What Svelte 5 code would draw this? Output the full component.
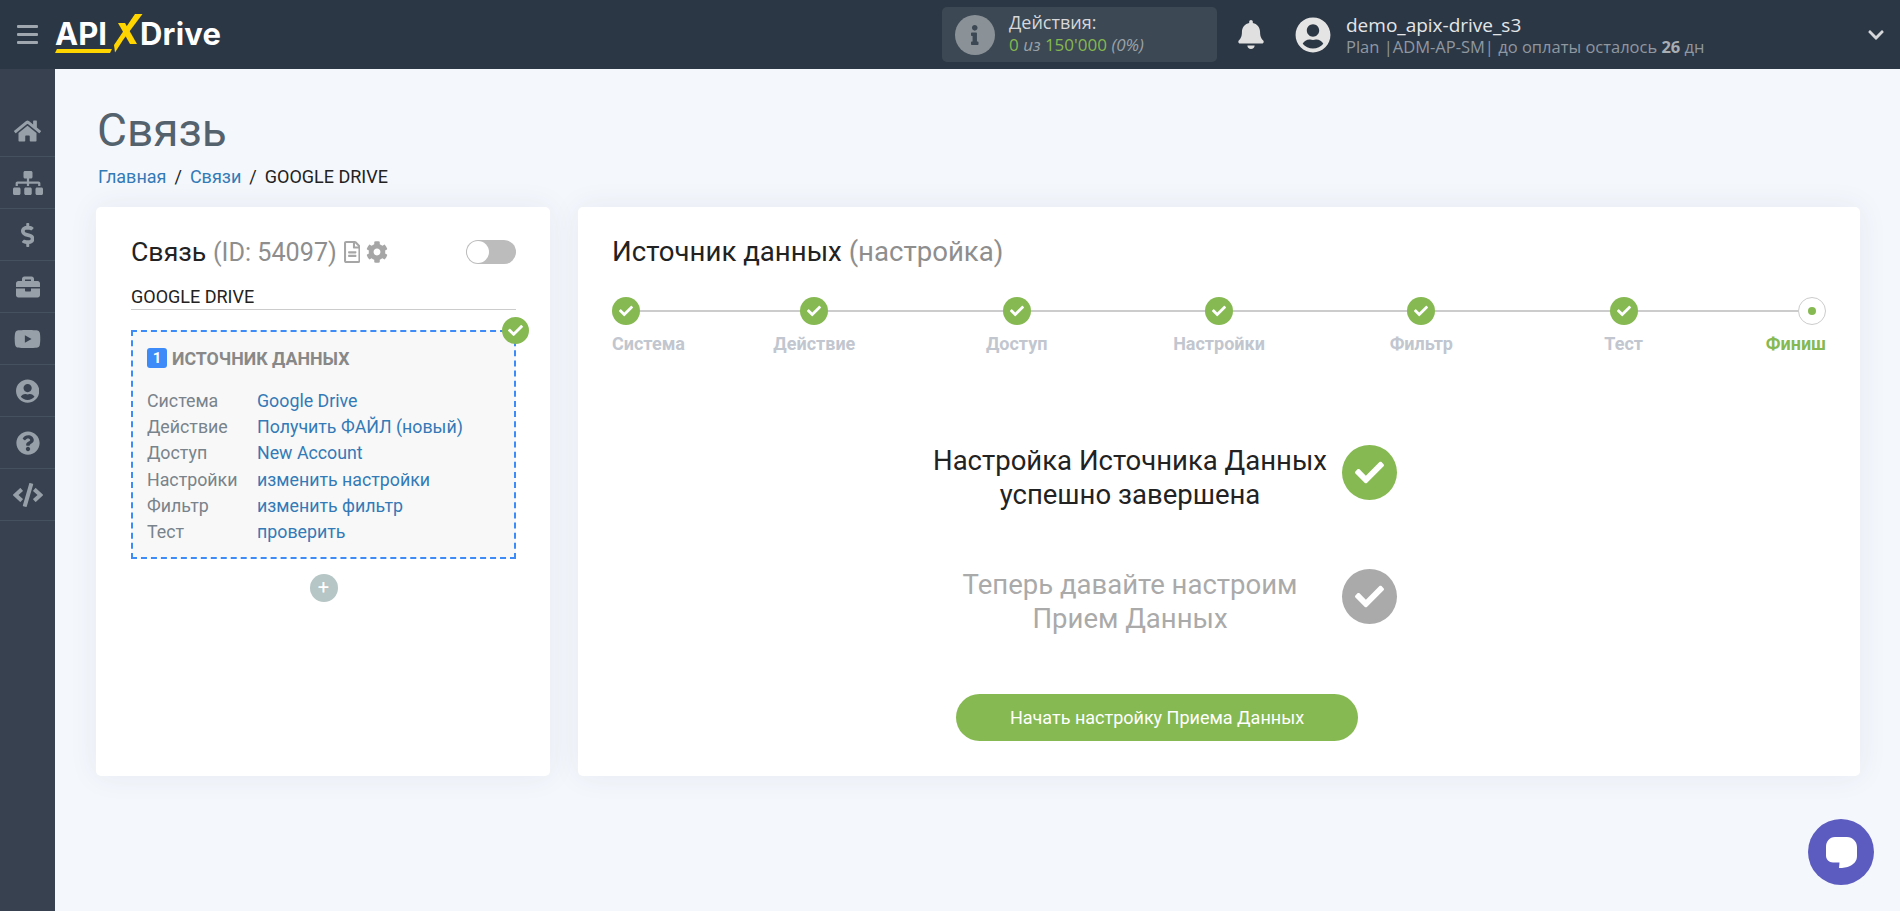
<script>
  const icons = {
    home: ['0 0 576 512', 'M280.37 148.26L96 300.11V464a16 16 0 0 0 16 16l112.06-.29a16 16 0 0 0 15.92-16V368a16 16 0 0 1 16-16h64a16 16 0 0 1 16 16v95.64a16 16 0 0 0 16 16.05L464 480a16 16 0 0 0 16-16V300L295.67 148.26a12.19 12.19 0 0 0-15.3 0zM571.6 251.47L488 182.56V44.05a12 12 0 0 0-12-12h-56a12 12 0 0 0-12 12v72.61L318.47 43a48 48 0 0 0-61 0L4.34 251.47a12 12 0 0 0-1.6 16.9l25.5 31A12 12 0 0 0 45.15 301l235.22-193.74a12.19 12.19 0 0 1 15.3 0L530.9 301a12 12 0 0 0 16.9-1.6l25.5-31a12 12 0 0 0-1.7-16.93z'],
    sitemap: ['0 0 640 512', 'M128 352H32c-17.67 0-32 14.33-32 32v96c0 17.67 14.33 32 32 32h96c17.67 0 32-14.33 32-32v-96c0-17.67-14.33-32-32-32zm-24-80h192v48h48v-48h192v48h48v-57.59c0-21.17-17.23-38.41-38.41-38.41H344v-64h40c17.67 0 32-14.33 32-32V32c0-17.67-14.33-32-32-32H256c-17.67 0-32 14.33-32 32v96c0 17.67 14.33 32 32 32h40v64H94.41C73.23 224 56 241.23 56 262.41V320h48v-48zm264 80h-96c-17.67 0-32 14.33-32 32v96c0 17.67 14.33 32 32 32h96c17.67 0 32-14.33 32-32v-96c0-17.67-14.33-32-32-32zm240 0h-96c-17.67 0-32 14.33-32 32v96c0 17.67 14.33 32 32 32h96c17.67 0 32-14.33 32-32v-96c0-17.67-14.33-32-32-32z'],
    dollar: ['0 0 288 512', 'M209.2 233.4l-108-31.6C88.7 198.2 80 186.5 80 173.5c0-16.3 13.2-29.5 29.5-29.5h66.3c12.2 0 24.2 3.7 34.2 10.5 6.1 4.1 14.3 3.1 19.5-2l34.8-34c7.1-6.9 6.1-18.4-1.8-24.5C238 74.8 207.4 64.1 176 64V16c0-8.8-7.2-16-16-16h-32c-8.8 0-16 7.2-16 16v48h-2.5C45.8 64-5.4 118.7.5 183.6c4.2 46.1 39.4 83.6 83.8 96.6l102.5 30c12.5 3.7 21.2 15.3 21.2 28.3 0 16.3-13.2 29.5-29.5 29.5h-66.3C100 368 88 364.3 78 357.5c-6.1-4.1-14.3-3.1-19.5 2l-34.8 34c-7.1 6.9-6.1 18.4 1.8 24.5 24.5 19.2 55.1 29.9 86.5 30v48c0 8.8 7.2 16 16 16h32c8.8 0 16-7.2 16-16v-48.2c46.6-.9 90.3-28.6 105.7-72.7 21.5-61.6-14.6-124.8-72.5-141.7z'],
    briefcase: ['0 0 512 512', 'M320 336c0 8.84-7.16 16-16 16h-96c-8.84 0-16-7.16-16-16v-48H0v144c0 25.6 22.4 48 48 48h416c25.6 0 48-22.4 48-48V288H320v48zm144-208h-80V80c0-25.6-22.4-48-48-48H176c-25.6 0-48 22.4-48 48v48H48c-25.6 0-48 22.4-48 48v80h512v-80c0-25.6-22.4-48-48-48zm-144 0H192V96h128v32z'],
    youtube: ['0 0 576 512', 'M549.655 124.083c-6.281-23.65-24.787-42.276-48.284-48.597C458.781 64 288 64 288 64S117.22 64 74.629 75.486c-23.497 6.322-42.003 24.947-48.284 48.597-11.412 42.867-11.412 132.305-11.412 132.305s0 89.438 11.412 132.305c6.281 23.65 24.787 41.5 48.284 47.821C117.22 448 288 448 288 448s170.78 0 213.371-11.486c23.497-6.321 42.003-24.171 48.284-47.821 11.412-42.867 11.412-132.305 11.412-132.305s0-89.438-11.412-132.305zm-317.51 213.508V175.185l142.739 81.205-142.739 81.201z'],
    user: ['0 0 496 512', 'M248 8C111 8 0 119 0 256s111 248 248 248 248-111 248-248S385 8 248 8zm0 96c48.6 0 88 39.4 88 88s-39.4 88-88 88-88-39.4-88-88 39.4-88 88-88zm0 344c-58.7 0-111.3-26.6-146.5-68.2 18.8-35.4 55.6-59.8 98.5-59.8 2.4 0 4.8.4 7.1 1.1 13 4.2 26.6 6.9 40.9 6.9 14.3 0 28-2.7 40.9-6.9 2.3-.7 4.7-1.1 7.1-1.1 42.9 0 79.7 24.4 98.5 59.8C359.3 421.4 306.7 448 248 448z'],
    question: ['0 0 512 512', 'M504 256c0 136.997-111.043 248-248 248S8 392.997 8 256C8 119.083 119.043 8 256 8s248 111.083 248 248zM262.655 90c-54.497 0-89.255 22.957-116.549 63.758-3.536 5.286-2.353 12.415 2.715 16.258l34.699 26.31c5.205 3.947 12.621 3.008 16.665-2.122 17.864-22.658 30.113-35.797 57.303-35.797 20.429 0 45.698 13.148 45.698 32.958 0 14.976-12.363 22.667-32.534 33.976C247.128 238.528 216 254.941 216 296v4c0 6.627 5.373 12 12 12h56c6.627 0 12-5.373 12-12v-1.333c0-28.462 83.186-29.647 83.186-106.667 0-58.002-60.165-102-116.531-102zM256 338c-25.365 0-46 20.635-46 46 0 25.364 20.635 46 46 46s46-20.636 46-46c0-25.365-20.635-46-46-46z'],
    code: ['0 0 640 512', 'M278.9 511.5l-61-17.7c-6.4-1.8-10-8.5-8.2-14.9L346.2 8.7c1.8-6.4 8.5-10 14.9-8.2l61 17.7c6.4 1.8 10 8.5 8.2 14.9L293.8 503.3c-1.9 6.4-8.5 10.1-14.9 8.2zm-114-112.2l43.5-46.4c4.6-4.9 4.3-12.7-.8-17.2L117 256l90.6-79.7c5.1-4.5 5.5-12.3.8-17.2l-43.5-46.4c-4.5-4.8-12.1-5.1-17-.5L3.8 247.2c-5.1 4.7-5.1 12.8 0 17.5l144.1 135.1c4.9 4.6 12.5 4.4 17-.5zm327.2.6l144.1-135.1c5.1-4.7 5.1-12.8 0-17.5L492.1 112.1c-4.8-4.5-12.4-4.3-17 .5L431.6 159c-4.6 4.9-4.3 12.7.8 17.2L523 256l-90.6 79.7c-5.1 4.5-5.5 12.3-.8 17.2l43.5 46.4c4.5 4.9 12.1 5.1 17 .6z'],
    bell: ['0 0 448 512', 'M224 512c35.32 0 63.97-28.65 63.97-64H160.03c0 35.35 28.65 64 63.97 64zm215.39-149.71c-19.32-20.76-55.47-51.99-55.47-154.29 0-77.7-54.48-139.9-127.94-155.16V32c0-17.67-14.32-32-31.98-32s-31.98 14.33-31.98 32v20.84C118.56 68.1 64.08 130.3 64.08 208c0 102.3-36.15 133.53-55.47 154.29-6 6.45-8.66 14.16-8.61 21.71.11 16.4 12.98 32 32.1 32h383.8c19.12 0 32-15.6 32.1-32 .05-7.55-2.61-15.27-8.61-21.71z'],
    check: ['0 0 512 512', 'M173.898 439.404l-166.4-166.4c-9.997-9.997-9.997-26.206 0-36.204l36.203-36.204c9.997-9.998 26.207-9.998 36.204 0L192 312.69 432.095 72.596c9.997-9.997 26.207-9.997 36.204 0l36.203 36.204c9.997 9.997 9.997 26.206 0 36.204l-294.4 294.401c-9.998 9.997-26.207 9.997-36.204-.001z'],
    cog: ['0 0 512 512', 'M487.4 315.7l-42.6-24.6c4.3-23.2 4.3-47 0-70.2l42.6-24.6c4.9-2.8 7.1-8.6 5.5-14-11.1-35.6-30-67.8-54.7-94.6-3.8-4.1-10-5.1-14.8-2.3L380.8 110c-17.9-15.4-38.5-27.3-60.8-35.1V25.8c0-5.6-3.9-10.5-9.4-11.7-36.7-8.2-74.3-7.8-109.2 0-5.5 1.2-9.4 6.1-9.4 11.7V75c-22.2 7.9-42.8 19.8-60.8 35.1L88.7 85.5c-4.9-2.8-11-1.9-14.8 2.3-24.7 26.7-43.6 58.9-54.7 94.6-1.7 5.4.6 11.2 5.5 14L67.3 221c-4.3 23.2-4.3 47 0 70.2l-42.6 24.6c-4.9 2.8-7.1 8.6-5.5 14 11.1 35.6 30 67.8 54.7 94.6 3.8 4.1 10 5.1 14.8 2.3l42.6-24.6c17.9 15.4 38.5 27.3 60.8 35.1v49.2c0 5.6 3.9 10.5 9.4 11.7 36.7 8.2 74.3 7.8 109.2 0 5.5-1.2 9.4-6.1 9.4-11.7v-49.2c22.2-7.9 42.8-19.8 60.8-35.1l42.6 24.6c4.9 2.8 11 1.9 14.8-2.3 24.7-26.7 43.6-58.9 54.7-94.6 1.5-5.5-.7-11.3-5.6-14.1zM256 336c-44.1 0-80-35.9-80-80s35.9-80 80-80 80 35.9 80 80-35.9 80-80 80z'],
    file: ['0 0 384 512', 'M288 248v28c0 6.6-5.4 12-12 12H108c-6.6 0-12-5.4-12-12v-28c0-6.6 5.4-12 12-12h168c6.6 0 12 5.4 12 12zm-12 72H108c-6.6 0-12 5.4-12 12v28c0 6.6 5.4 12 12 12h168c6.6 0 12-5.4 12-12v-28c0-6.6-5.4-12-12-12zm108-188.1V464c0 26.5-21.5 48-48 48H48c-26.5 0-48-21.5-48-48V48C0 21.5 21.5 0 48 0h204.1C264.8 0 277 5.1 286 14.1L369.9 98c9 8.9 14.1 21.2 14.1 33.9zm-128-80V128h76.1L256 51.9zM336 464V176H232c-13.3 0-24-10.7-24-24V48H48v416h288z'],
    info: ['0 0 192 512', 'M20 424.229h20V279.771H20c-11.046 0-20-8.954-20-20V212c0-11.046 8.954-20 20-20h112c11.046 0 20 8.954 20 20v212.229h20c11.046 0 20 8.954 20 20V492c0 11.046-8.954 20-20 20H20c-11.046 0-20-8.954-20-20v-47.771c0-11.046 8.954-20 20-20zM96 0C56.235 0 24 32.235 24 72s32.235 72 72 72 72-32.235 72-72S135.764 0 96 0z'],
    chevron: ['0 0 448 512', 'M207.029 381.476L12.686 187.132c-9.373-9.373-9.373-24.569 0-33.941l22.667-22.667c9.357-9.357 24.522-9.375 33.901-.04L224 284.505l154.745-154.021c9.379-9.335 24.544-9.317 33.901.04l22.667 22.667c9.373 9.373 9.373 24.569 0 33.941L240.971 381.476c-9.373 9.372-24.569 9.372-33.942 0z']
  };

  const sideItems = ['home', 'sitemap', 'dollar', 'briefcase', 'youtube', 'user', 'question', 'code'];

  const rows = [
    { label: 'Система', value: 'Google Drive' },
    { label: 'Действие', value: 'Получить ФАЙЛ (новый)' },
    { label: 'Доступ', value: 'New Account' },
    { label: 'Настройки', value: 'изменить настройки' },
    { label: 'Фильтр', value: 'изменить фильтр' },
    { label: 'Тест', value: 'проверить' }
  ];

  const steps = ['Система', 'Действие', 'Доступ', 'Настройки', 'Фильтр', 'Тест'];
</script>

<div class="page">
  <header class="topbar">
    <div class="burger"><span></span><span></span><span></span></div>
    <div class="logo">
      <span class="logo-api">API</span>
      <svg class="logo-x" viewBox="0 0 30 39" aria-hidden="true">
        <path d="M22 0h7.500L10 26 2 38.500 1 31z" fill="#ffd500" />
        <path d="M5 9h7L24 30h-7z" fill="#ffd500" />
      </svg>
      <span class="logo-drive">Drive</span>
      <span class="logo-bar"></span>
    </div>

    <div class="top-right">
      <div class="actions">
        <div class="info-round">
          <svg viewBox={icons.info[0]}><path d={icons.info[1]} /></svg>
        </div>
        <div class="actions-text">
          <div class="actions-title">Действия:</div>
          <div class="actions-count"><b>0</b> <i>из</i> <b>150'000</b> <i>(0%)</i></div>
        </div>
      </div>
      <svg class="bell" viewBox={icons.bell[0]}><path d={icons.bell[1]} /></svg>
      <svg class="avatar" viewBox={icons.user[0]}><path d={icons.user[1]} /></svg>
      <div class="user">
        <div class="user-name">demo_apix-drive_s3</div>
        <div class="user-plan">Plan |ADM-AP-SM| до оплаты осталось <b>26</b> дн</div>
      </div>
      <svg class="chevron" viewBox={icons.chevron[0]}><path d={icons.chevron[1]} /></svg>
    </div>
  </header>

  <div class="layout">
    <nav class="sidebar">
      {#each sideItems as item}
        <div class="side-item">
          <svg viewBox={icons[item][0]}><path d={icons[item][1]} /></svg>
        </div>
      {/each}
    </nav>

    <main class="content">
      <h1>Связь</h1>
      <div class="crumbs">
        <span class="link">Главная</span><span class="sep">/</span><span class="link">Связи</span><span class="sep">/</span><span>GOOGLE DRIVE</span>
      </div>

      <div class="cards">
        <section class="card left">
          <div class="left-head">
            <h2>Связь <span class="muted">(ID: 54097)</span></h2>
            <svg class="head-icon file" viewBox={icons.file[0]}><path d={icons.file[1]} /></svg>
            <svg class="head-icon cog" viewBox={icons.cog[0]}><path d={icons.cog[1]} /></svg>
            <div class="toggle"><span></span></div>
          </div>
          <div class="name-input">GOOGLE DRIVE</div>

          <div class="source">
            <div class="badge-ok">
              <svg viewBox={icons.check[0]}><path d={icons.check[1]} /></svg>
            </div>
            <div class="source-title"><span class="num">1</span>ИСТОЧНИК ДАННЫХ</div>
            {#each rows as row}
              <div class="row">
                <span class="row-label">{row.label}</span>
                <span class="link">{row.value}</span>
              </div>
            {/each}
          </div>

          <div class="plus">+</div>
        </section>

        <section class="card right">
          <h2>Источник данных <span class="muted">(настройка)</span></h2>

          <div class="steps">
            <div class="steps-line"></div>
            {#each steps as step, i}
              <div class="step" class:first={i === 0}>
                <div class="dot">
                  <svg viewBox={icons.check[0]}><path d={icons.check[1]} /></svg>
                </div>
                <span>{step}</span>
              </div>
            {/each}
            <div class="step current">
              <div class="dot"><i></i></div>
              <span>Финиш</span>
            </div>
          </div>

          <div class="finish">
            <div class="finish-row">
              <p>Настройка Источника Данных<br />успешно завершена</p>
              <div class="big-check">
                <svg viewBox={icons.check[0]}><path d={icons.check[1]} /></svg>
              </div>
            </div>
            <div class="finish-row next">
              <p>Теперь давайте настроим<br />Прием Данных</p>
              <div class="big-check">
                <svg viewBox={icons.check[0]}><path d={icons.check[1]} /></svg>
              </div>
            </div>
            <button>Начать настройку Приема Данных</button>
          </div>
        </section>
      </div>
    </main>
  </div>

  <div class="chat">
    <svg viewBox="0 0 33 33"><path d="M10 1h12c5.500 0 10 4.500 10 10v9c0 5-3 8-7 10-3 1.500-7 2-11 2l.5-5.500H8c-4 0-7-3-7-7V11C1 5.500 4.500 1 10 1z" /></svg>
  </div>
</div>

<style>
  :global(body) {
    margin: 0;
    background: #f4f7fc;
    font-family: Roboto, "Liberation Sans", sans-serif;
  }

  .page {
    min-height: 911px;
    display: flex;
    flex-direction: column;
  }

  .topbar {
    height: 69px;
    background: #2c3745;
    display: flex;
    align-items: center;
    flex-shrink: 0;
  }

  .burger {
    width: 21px;
    margin-left: 17px;
    display: flex;
    flex-direction: column;
    gap: 5px;
  }

  .burger span {
    height: 3px;
    background: #a0a7ae;
    border-radius: 1px;
  }

  .logo {
    position: relative;
    margin-left: 17px;
    width: 170px;
    height: 40px;
    margin-top: -3px;
    display: flex;
    align-items: center;
    color: #fff;
    font-family: Inter, sans-serif;
    font-weight: 700;
    font-size: 31px;
  }

  .logo-api {
    width: 58px;
  }

  .logo-x {
    width: 30px;
    height: 39px;
    flex-shrink: 0;
  }

  .logo-drive {
    margin-left: -3px;
    letter-spacing: 0.2px;
  }

  .logo-bar {
    position: absolute;
    left: 1px;
    bottom: 0;
    width: 55px;
    height: 4px;
    background: #ffd500;
    transform: skewX(-25deg);
  }

  .top-right {
    margin-left: auto;
    display: flex;
    align-items: center;
    font-family: "Open Sans", sans-serif;
    padding-right: 15px;
  }

  .actions {
    width: 275px;
    height: 55px;
    background: #3c4853;
    border-radius: 5px;
    display: flex;
    align-items: center;
    box-sizing: border-box;
    padding-left: 13px;
    gap: 14px;
  }

  .info-round {
    width: 40px;
    height: 40px;
    border-radius: 50%;
    background: #8a9298;
    display: flex;
    align-items: center;
    justify-content: center;
  }

  .info-round svg {
    height: 20px;
    fill: #3c4853;
  }

  .actions-text {
    margin-top: -3px;
  }

  .actions-title {
    color: #d5d7da;
    font-size: 18px;
    line-height: 22px;
  }

  .actions-count {
    font-size: 17px;
    line-height: 23px;
    color: #9aa2a9;
  }

  .actions-count b {
    color: #85b84f;
    font-weight: 400;
  }

  .bell {
    width: 26px;
    height: 29px;
    margin-left: 21px;
    fill: #e0e0e0;
  }

  .avatar {
    width: 36px;
    height: 36px;
    margin-left: 31px;
    fill: #e4e4e4;
  }

  .user {
    margin-left: 15px;
    width: 521px;
  }

  .user-name {
    color: #e4e6e8;
    font-size: 19px;
    line-height: 24px;
  }

  .user-plan {
    color: #8f98a1;
    font-size: 16.500px;
    line-height: 20px;
  }

  .user-plan b {
    font-weight: 700;
    color: #a8aeb4;
  }

  .chevron {
    width: 18px;
    height: 18px;
    fill: #d5d7da;
  }

  .layout {
    flex: 1;
    display: flex;
  }

  .sidebar {
    width: 55px;
    flex-shrink: 0;
    background: #37414f;
    padding-top: 36px;
    box-sizing: border-box;
  }

  .side-item {
    height: 52px;
    box-sizing: border-box;
    border-bottom: 1px solid #465160;
    display: flex;
    align-items: center;
    justify-content: center;
  }

  .side-item svg {
    height: 24px;
    fill: #979fa8;
  }

  .content {
    flex: 1;
    padding: 0 40px 0 41px;
    min-width: 0;
  }

  h1 {
    margin: 34px 0 0 1px;
    font-size: 46px;
    line-height: 54px;
    font-weight: 400;
    color: #54626d;
  }

  .crumbs {
    margin-top: 9px;
    padding-left: 2px;
    font-size: 18px;
    line-height: 22px;
    color: #222;
  }

  .link {
    color: #337ab7;
  }

  .sep {
    margin: 0 8px;
  }

  .cards {
    margin-top: 19px;
    display: flex;
    gap: 28px;
  }

  .card {
    height: 569px;
    box-sizing: border-box;
    background: #fff;
    border-radius: 5px;
    box-shadow: 0 0 30px rgba(40, 60, 90, 0.07);
  }

  .card.left {
    width: 454px;
    flex-shrink: 0;
    padding: 0 34px 0 35px;
  }

  .card.right {
    flex: 1;
    padding: 0 34px;
  }

  h2 {
    margin: 0;
    font-size: 27.600px;
    line-height: 34px;
    font-weight: 400;
    color: #222;
  }

  .muted {
    color: #8e8e8e;
  }

  .left-head {
    display: flex;
    align-items: center;
    padding-top: 28px;
    height: 34px;
  }

  .left-head h2 {
    font-size: 26.700px;
  }

  .left-head .muted {
    font-size: 25.200px;
  }

  .head-icon {
    fill: #a6a6a6;
    height: 22px;
  }

  .head-icon.file {
    margin-left: 7px;
  }

  .head-icon.cog {
    margin-left: 6px;
  }

  .toggle {
    margin-left: auto;
    width: 50px;
    height: 24px;
    border-radius: 12px;
    background: #bcbcbc;
    position: relative;
  }

  .toggle span {
    position: absolute;
    left: 1px;
    top: 1px;
    width: 22px;
    height: 22px;
    border-radius: 50%;
    background: #fff;
  }

  .name-input {
    margin-top: 16px;
    height: 25px;
    line-height: 24px;
    font-size: 18px;
    color: #222;
    border-bottom: 1px solid #ccc;
    box-sizing: border-box;
  }

  .source {
    position: relative;
    margin-top: 20px;
    height: 229px;
    box-sizing: border-box;
    border: 2px dashed #3d8bf8;
    background: #f8f8f8;
    padding: 14px 14px 0;
  }

  .badge-ok {
    position: absolute;
    right: -15px;
    top: -15px;
    width: 27px;
    height: 27px;
    border-radius: 50%;
    background: #86b952;
    display: flex;
    align-items: center;
    justify-content: center;
  }

  .badge-ok svg {
    width: 15px;
    fill: #fff;
  }

  .source-title {
    display: flex;
    align-items: center;
    font-size: 17.800px;
    font-weight: 700;
    color: #888;
    height: 24px;
    margin-bottom: 18px;
  }

  .num {
    width: 20px;
    height: 20px;
    border-radius: 3px;
    background: #3d8bf8;
    color: #fff;
    font-size: 15px;
    line-height: 20px;
    text-align: center;
    margin-right: 5px;
  }

  .row {
    display: flex;
    font-size: 17.800px;
    line-height: 26.200px;
  }

  .row-label {
    width: 110px;
    color: #78838b;
  }

  .plus {
    width: 28px;
    height: 28px;
    margin: 15px auto 0;
    border-radius: 50%;
    background: #b6c5c5;
    color: #fff;
    font-size: 20px;
    line-height: 27px;
    text-align: center;
  }

  .card.right > h2 {
    padding-top: 28px;
  }

  .steps {
    position: relative;
    margin-top: 28px;
    display: grid;
    grid-template-columns: 1fr repeat(5, 2fr) 1fr;
  }

  .steps-line {
    position: absolute;
    left: 13px;
    right: 13px;
    top: 13px;
    height: 2px;
    background: #ccc;
  }

  .step {
    position: relative;
    display: flex;
    flex-direction: column;
    align-items: center;
    font-size: 18px;
    font-weight: 700;
    line-height: 20px;
    color: #c1c6cf;
  }

  .step.first {
    align-items: flex-start;
  }

  .step.current {
    align-items: flex-end;
    color: #86b952;
  }

  .dot {
    width: 28px;
    height: 28px;
    border-radius: 50%;
    background: #86b952;
    display: flex;
    align-items: center;
    justify-content: center;
    margin-bottom: 9px;
    box-sizing: border-box;
  }

  .dot svg {
    width: 14px;
    fill: #fff;
  }

  .current .dot {
    background: #fff;
    border: 1px solid #ccc;
  }

  .dot i {
    width: 8px;
    height: 8px;
    border-radius: 50%;
    background: #86b952;
  }

  .finish {
    width: 477px;
    margin: 84px 0 0 308px;
    display: flex;
    flex-direction: column;
    align-items: center;
  }

  .finish-row {
    display: flex;
    align-items: center;
    width: 100%;
    height: 68px;
  }

  .finish-row.next {
    margin-top: 56px;
  }

  .finish-row p {
    flex: 1;
    margin: 0;
    padding: 11px 2px 0 0;
    text-align: center;
    font-size: 27.500px;
    line-height: 34px;
    color: #222;
  }

  .finish-row.next p {
    color: #aaa;
  }

  .big-check {
    width: 55px;
    height: 55px;
    border-radius: 50%;
    background: #86b952;
    display: flex;
    align-items: center;
    justify-content: center;
    flex-shrink: 0;
  }

  .next .big-check {
    background: #aaa;
  }

  .big-check svg {
    width: 29px;
    fill: #fff;
  }

  button {
    margin: 64px 3px 0 0;
    width: 402px;
    height: 47px;
    border: 0;
    border-radius: 24px;
    background: #86b952;
    color: #fff;
    font-family: inherit;
    font-size: 18px;
    font-weight: 400;
  }

  .chat {
    position: fixed;
    right: 26px;
    bottom: 26px;
    width: 66px;
    height: 66px;
    border-radius: 50%;
    background: #5c5bbf;
    display: flex;
    align-items: center;
    justify-content: center;
  }

  .chat svg {
    width: 33px;
    height: 33px;
    fill: #fff;
  }
</style>
